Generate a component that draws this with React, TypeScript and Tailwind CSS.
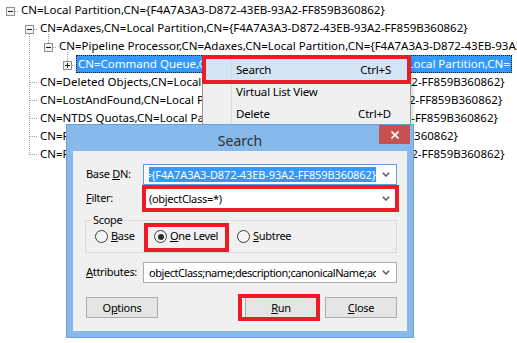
import React from 'react';

const GUID = '{F4A7A3A3-D872-43EB-93A2-FF859B360862}';
const LP = 'CN=Local Partition,CN=';

type Row = { pad: string; exp: 'minus' | 'plus' | 'none'; text: string; shift?: string; selected?: boolean };

const rows: Row[] = [
    { pad: 'pl-[6px]', exp: 'minus', text: LP },
    { pad: 'pl-[25px]', exp: 'minus', text: 'CN=Adaxes,' + LP },
    { pad: 'pl-[44px]', exp: 'minus', text: 'CN=Pipeline Processor,CN=Adaxes,' + LP },
    { pad: 'pl-[63px]', exp: 'plus', text: 'CN=Command Queue,CN=Pipeline Processor,CN=Adaxes,' + LP, selected: true },
    { pad: 'pl-[25px]', exp: 'none', text: 'CN=Deleted Objects,' + LP, shift: '-ml-[10px]' },
    { pad: 'pl-[25px]', exp: 'none', text: 'CN=LostAndFound,' + LP, shift: '-ml-[5px]' },
    { pad: 'pl-[25px]', exp: 'none', text: 'CN=NTDS Quotas,' + LP, shift: '-ml-[3px]' },
    { pad: 'pl-[25px]', exp: 'none', text: 'CN=Roles,' + LP },
    { pad: 'pl-[25px]', exp: 'none', text: 'CN=Program Data,' + LP },
];

function Expander({ type }: { type: 'minus' | 'plus' | 'none' }) {
    if (type === 'none') return <div className="w-[9px] shrink-0" />;
    return (
        <svg width="9" height="9" viewBox="0 0 9 9" className="shrink-0 mt-[6px]">
            <rect x="0.5" y="0.5" width="8" height="8" fill="#f3f3f3" stroke="#919191" />
            <path d="M2 4.5h5" stroke="#1e1e1e" />
            {type === 'plus' && <path d="M4.5 2v5" stroke="#1e1e1e" />}
        </svg>
    );
}

// dotted connector lines of the tree view
function TreeLines() {
    const s = { stroke: '#a0a0a0', strokeDasharray: '1 1', fill: 'none' };
    return (
        <svg className="absolute left-0 top-0 pointer-events-none" width="90" height="160">
            <path d="M15 11.5h4" {...s} />
            <path d="M29.5 34V155" {...s} />
            <path d="M34 29.5h4" {...s} />
            <path d="M48.5 34V43" {...s} />
            <path d="M53 47.5h4" {...s} />
            <path d="M67.5 52V61" {...s} />
            <path d="M72 65.5h4" {...s} />
            <path d="M30 82.5h8M30 100.5h8M30 118.5h8M30 136.5h8M30 154.5h8" {...s} />
        </svg>
    );
}

function Chevron() {
    return (
        <svg width="8" height="5" viewBox="0 0 8 5">
            <path d="M0.8 0.8L4 4L7.2 0.8" stroke="#5a5a5a" strokeWidth="1.5" fill="none" />
        </svg>
    );
}

function Combo({ children, focused }: { children: React.ReactNode; focused?: boolean }) {
    return (
        <div className={`flex-1 min-w-0 h-[21px] flex items-center bg-white border ${focused ? 'border-[#5b9fe3]' : 'border-[#acacac]'}`}>
            <div className="flex-1 min-w-0 ml-[5px] overflow-hidden whitespace-nowrap leading-[17px]">{children}</div>
            <div className="w-[20px] shrink-0 flex justify-center"><Chevron /></div>
        </div>
    );
}

function Radio({ checked, children, width }: { checked?: boolean; children: React.ReactNode; width: string }) {
    return (
        <div className={`flex items-center gap-[3px] shrink-0 ${width}`}>
            <div className="w-[13px] h-[13px] rounded-full border border-[#3c3c3c] bg-[#f4f4f4] flex items-center justify-center">
                {checked && <div className="w-[6px] h-[6px] rounded-full bg-[#2e2e2e]" />}
            </div>
            <span className="whitespace-nowrap">{children}</span>
        </div>
    );
}

function Button({ children }: { children: React.ReactNode }) {
    return (
        <div className="w-[72px] h-[21px] flex items-center justify-center bg-[#e5e5e5] border border-[#acacac] leading-[19px]">
            {children}
        </div>
    );
}

export default function App() {
    return (
        <div className="relative w-[517px] h-[343px] overflow-hidden bg-white text-black text-[11.5px] font-['Noto_Sans',sans-serif]">
            {/* Tree view */}
            <div className="pt-[1px] whitespace-nowrap">
                {rows.map((r, i) => (
                    <div key={i} className={`h-[18px] flex items-start ${r.pad}`}>
                        <Expander type={r.exp} />
                        {r.selected ? (
                            <div className="ml-[4px] w-[436px] h-[18px] shrink-0 overflow-hidden bg-[#3399ff] text-white border border-dotted border-[#1b1b1b] pl-[1px] leading-[16px]">
                                {r.text}{GUID}
                            </div>
                        ) : (
                            <div className="ml-[4px] px-[2px] leading-[18px]">
                                {r.text}<span className={r.shift}>{GUID}</span>
                            </div>
                        )}
                    </div>
                ))}
            </div>
            <TreeLines />

            {/* Context menu */}
            <div className="absolute left-[202px] top-[56px] w-[209px] h-[80px] bg-[#f0f0f0] border border-[#979797] pt-[2px] tracking-[-0.2px] shadow-[2px_2px_3px_rgba(0,0,0,0.15)]">
                {[
                    { label: 'Search', key: 'Ctrl+S', hl: true },
                    { label: 'Virtual List View', key: '' },
                    { label: 'Delete', key: 'Ctrl+D' },
                ].map(it => (
                    <div key={it.label} className={`h-[22px] flex items-center ${it.hl ? 'bg-[#d3e4f5]' : ''}`}>
                        <div className="w-[29px] h-full border-r border-[#dadada]" />
                        <div className="flex-1 pl-[4px]">{it.label}</div>
                        <div className="pr-[19px]">{it.key}</div>
                    </div>
                ))}
            </div>

            {/* Search dialog */}
            <div className="absolute left-[66px] top-[124px] w-[348px] h-[214px] bg-[#88b9eb] border border-[#6f9fd3] flex flex-col">
                <div className="h-[26px] relative flex items-center justify-center">
                    <span className="text-[14px] text-[#2f2f2f] mt-[4px]">Search</span>
                    <div className="absolute right-[3px] top-0 w-[31px] h-[19px] bg-[#c75050] flex items-center justify-center">
                        <svg width="8" height="8" viewBox="0 0 8 8">
                            <path d="M0.5 0.5L7.5 7.5M7.5 0.5L0.5 7.5" stroke="#fff" strokeWidth="1.6" />
                        </svg>
                    </div>
                </div>
                <div className="mx-[6px] h-[180px] bg-[#f0f0f0] pl-[13px] pr-[10px] flex flex-col text-[11px] tracking-[-0.3px]">
                    <div className="mt-[13px] h-[21px] flex items-center">
                        <div className="w-[57px] shrink-0 whitespace-nowrap">Base <u>D</u>N:</div>
                        <Combo focused>
                            <span className="-ml-[4px] bg-[#3399ff] text-white tracking-[-0.1px] pr-[1px]">={GUID}</span>
                        </Combo>
                    </div>
                    <div className="mt-[3px] h-[21px] flex items-center">
                        <div className="w-[57px] shrink-0 whitespace-nowrap"><u>F</u>ilter:</div>
                        <Combo>(objectClass=*)</Combo>
                    </div>
                    <div className="relative mt-[11px] -ml-[1px] h-[33px] border border-[#d9d9d9] flex items-center pl-[9px]">
                        <span className="absolute -top-[10px] left-[5px] px-[2px] bg-[#f0f0f0] leading-[18px]">Scope</span>
                        <Radio width="w-[59px]"><u>B</u>ase</Radio>
                        <Radio width="w-[83px]" checked><u>O</u>ne Level</Radio>
                        <Radio width="w-[80px]"><u>S</u>ubtree</Radio>
                    </div>
                    <div className="mt-[9px] h-[21px] flex items-center">
                        <div className="w-[57px] shrink-0 whitespace-nowrap"><u>A</u>ttributes:</div>
                        <Combo><span className="tracking-[-0.45px]">objectClass;name;description;canonicalName;adsPath</span></Combo>
                    </div>
                    <div className="mt-[14px] flex items-center">
                        <Button>O<u>p</u>tions</Button>
                        <div className="flex-1" />
                        <Button><u>R</u>un</Button>
                        <div className="w-[8px]" />
                        <Button><u>C</u>lose</Button>
                    </div>
                </div>
            </div>

            {/* red annotation boxes */}
            <div className="absolute left-[202px] top-[55px] w-[209px] h-[29px] border-4 border-[#ed1c24]" />
            <div className="absolute left-[142px] top-[185px] w-[257px] h-[27px] border-4 border-[#ed1c24]" />
            <div className="absolute left-[144px] top-[223px] w-[85px] h-[29px] border-4 border-[#ed1c24]" />
            <div className="absolute left-[238px] top-[294px] w-[82px] h-[27px] border-4 border-[#ed1c24]" />
        </div>
    );
}
